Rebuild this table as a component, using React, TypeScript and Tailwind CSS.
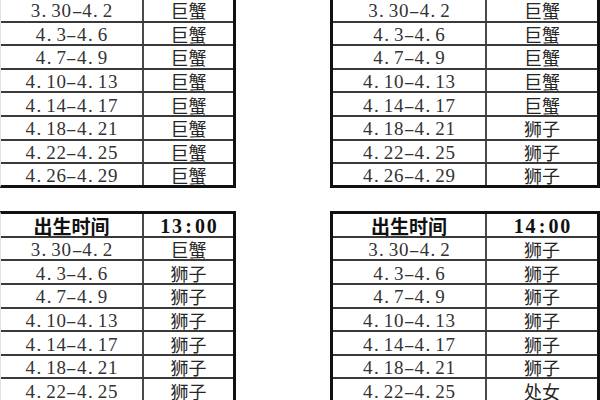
type Row = [string, string]

const dates = ["3.30-4.2", "4.3-4.6", "4.7-4.9", "4.10-4.13", "4.14-4.17", "4.18-4.21", "4.22-4.25", "4.26-4.29"]

const topLeft: Row[] = dates.map((d) => [d, "巨蟹"])
const topRight: Row[] = dates.map((d, i) => [d, i < 5 ? "巨蟹" : "狮子"])
const bottomLeft: Row[] = dates.slice(0, 7).map((d, i) => [d, i < 1 ? "巨蟹" : "狮子"])
const bottomRight: Row[] = dates.slice(0, 7).map((d, i) => [d, i < 6 ? "狮子" : "处女"])

const serif = "font-['Liberation_Serif',serif]"
const cjk = "font-['Noto_Sans_CJK_SC',sans-serif]"

// half-width cells, like the SimSun digits in the sheet
const Cells = ({text, bold}: { text: string, bold?: boolean }) => (
    <span className="inline-flex">
        {text.split("").map((c, i) => (
            <span key={i}
                  className={`inline-block ${bold ? "w-[11.6px]" : "w-[10.3px]"} ${c === "." ? "text-left pl-[1px]" : "text-center"} ${c === "-" ? "scale-x-[1.7]" : ""}`}>
                {c}
            </span>
        ))}
    </span>
)

const DataRow = ({row, wide, last}: { row: Row, wide: boolean, last?: boolean }) => (
    <div className={last ? "flex h-[21px] shrink-0" : "flex h-[23.6px] shrink-0 border-b-2 border-[#3a3a3a]"}>
        <div
            className={`${wide ? "w-[154px]" : "w-[143px]"} shrink-0 border-r-2 border-[#4a4a4a] flex items-center justify-center pt-[2px] text-[19px] leading-none text-[#333] ${serif}`}>
            <Cells text={row[0]}/>
        </div>
        <div className={`flex-1 flex items-center justify-center pt-[1px] text-[18px] leading-none text-[#262626] ${cjk}`}>
            {row[1]}
        </div>
    </div>
)

const HeaderRow = ({time, wide}: { time: string, wide: boolean }) => (
    <div className="flex h-[23.7px] shrink-0 border-b-2 border-[#3a3a3a]">
        <div
            className={`${wide ? "w-[154px]" : "w-[143px]"} shrink-0 border-r-2 border-[#4a4a4a] flex items-center justify-center pt-[1px] text-[19px] leading-none font-bold text-[#111] ${cjk}`}>
            出生时间
        </div>
        <div
            className={`flex-1 flex items-center justify-center pt-[2px] text-[20px] leading-none font-bold text-[#111] ${serif}`}>
            <Cells text={time} bold/>
        </div>
    </div>
)

const Table = ({rows, wide, header}: { rows: Row[], wide: boolean, header?: string }) => (
    <div
        className={`flex flex-col ${wide ? "w-[270px] border-x-[3px] border-[#111]" : "w-[236px] border-r-[3px] border-l border-r-[#111] border-l-[#e2e2e2]"} ${header ? "border-t-[3px] border-t-[#111]" : "border-b-[3px] border-b-[#111]"}`}>
        {header && <HeaderRow time={header} wide={wide}/>}
        {rows.map((r, i) => (
            <DataRow key={r[0]} row={r} wide={wide} last={!header && i === rows.length - 1}/>
        ))}
    </div>
)

export default function App() {
    return (
        <div className="w-[600px] h-[400px] overflow-hidden bg-white">
            <div className="flex gap-[94px] -mt-[1px]">
                <Table rows={topLeft} wide={false}/>
                <Table rows={topRight} wide={true}/>
            </div>
            <div className="flex gap-[94px] mt-[23px] items-start">
                <Table rows={bottomLeft} wide={false} header="13:00"/>
                <Table rows={bottomRight} wide={true} header="14:00"/>
            </div>
        </div>
    )
}
